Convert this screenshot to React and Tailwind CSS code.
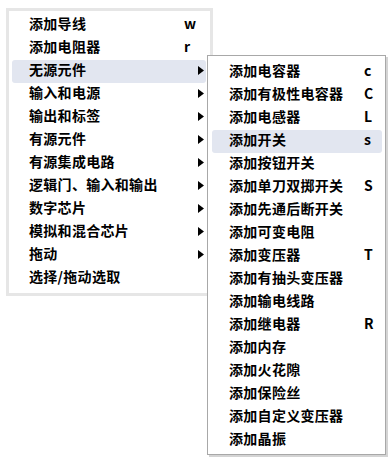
import React from "react";

const mainItems = [
  { label: "添加导线", key: "w" },
  { label: "添加电阻器", key: "r" },
  { label: "无源元件", sub: true, active: true },
  { label: "输入和电源", sub: true },
  { label: "输出和标签", sub: true },
  { label: "有源元件", sub: true },
  { label: "有源集成电路", sub: true },
  { label: "逻辑门、输入和输出", sub: true },
  { label: "数字芯片", sub: true },
  { label: "模拟和混合芯片", sub: true },
  { label: "拖动", sub: true },
  { label: "选择/拖动选取" },
];

const passiveItems = [
  { label: "添加电容器", key: "c" },
  { label: "添加有极性电容器", key: "C" },
  { label: "添加电感器", key: "L" },
  { label: "添加开关", key: "s", active: true },
  { label: "添加按钮开关" },
  { label: "添加单刀双掷开关", key: "S" },
  { label: "添加先通后断开关" },
  { label: "添加可变电阻" },
  { label: "添加变压器", key: "T" },
  { label: "添加有抽头变压器" },
  { label: "添加输电线路" },
  { label: "添加继电器", key: "R" },
  { label: "添加内存" },
  { label: "添加火花隙" },
  { label: "添加保险丝" },
  { label: "添加自定义变压器" },
  { label: "添加晶振" },
];

const font = { fontFamily: '"Noto Sans CJK SC", "Liberation Sans", sans-serif' };

const Arrow = () => (
  <svg width="6" height="9" viewBox="0 0 6 9" className="block mt-[2px]">
    <path d="M0 0 L6 4.5 L0 9 Z" fill="#000" />
  </svg>
);

const MainRow = ({ item }) => (
  <div
    className={`flex items-center h-[23px] pb-[5px] pl-[17px] pr-[2px] rounded-[3px] ${
      item.active ? "bg-[#e2e6f0]" : ""
    }`}
  >
    <span className="flex-1 text-[14px] font-bold leading-none whitespace-nowrap tracking-[0.3px]">
      {item.label}
    </span>
    {item.key && (
      <span className="w-[20px] text-[14px] font-bold leading-none">
        {item.key}
      </span>
    )}
    {item.sub && <Arrow />}
  </div>
);

const SubRow = ({ item }) => (
  <div
    className={`flex items-center h-[23px] pb-[5px] pl-[17px] pr-[8px] rounded-[3px] ${
      item.active ? "bg-[#e2e6f0]" : ""
    }`}
  >
    <span className="flex-1 text-[14px] font-bold leading-none whitespace-nowrap tracking-[0.3px]">
      {item.label}
    </span>
    {item.key && (
      <span className="w-[10px] text-[14px] font-bold leading-none">
        {item.key}
      </span>
    )}
  </div>
);

export default function App() {
  return (
    <div className="relative w-[388px] h-[457px] bg-white text-black" style={font}>
      <div className="pt-[8px] pl-[6px]">
        <div className="w-[207px] h-[288px] border-[3px] border-[#e6e6e6] bg-white pt-[3px] pl-[3px] pr-[4px]">
          {mainItems.map((item) => (
            <MainRow key={item.label} item={item} />
          ))}
        </div>
      </div>

      {/* submenu for 无源元件 */}
      <div className="absolute left-[207px] top-[55px] w-[179px] h-[400px] border border-[#a8a8a8] bg-white pt-[5px] pl-[4px] pr-[3px] shadow-[2px_2px_0_#d4d4d4]">
        {passiveItems.map((item) => (
          <SubRow key={item.label} item={item} />
        ))}
      </div>
    </div>
  );
}
